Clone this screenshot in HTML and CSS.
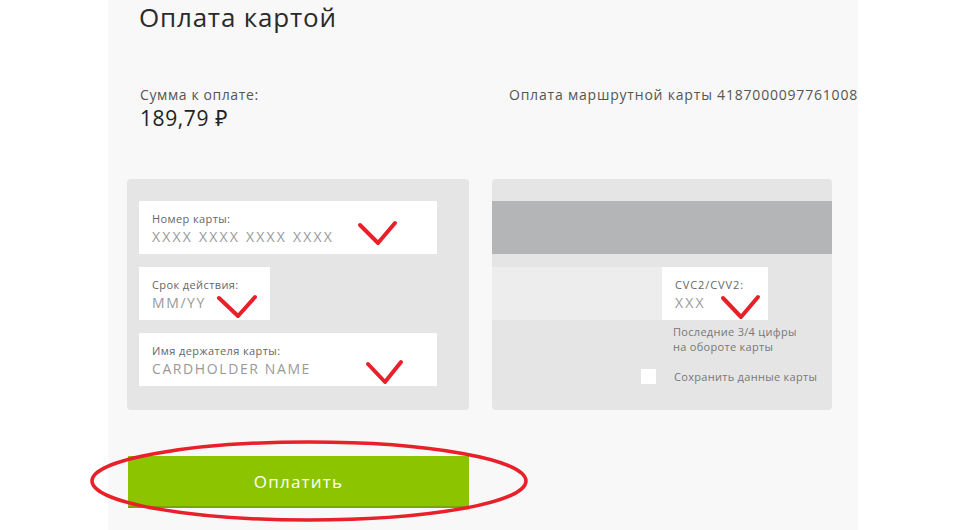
FILE: index.html
```html
<!DOCTYPE html>
<html lang="ru">
<head>
<meta charset="utf-8">
<title>Оплата картой</title>
<link rel="stylesheet" href="styles.css">
</head>
<body>
<div class="panel">
  <h1 class="title">Оплата картой</h1>
  <div class="summary">
    <div class="amount">
      <div class="amount-label">Сумма к оплате:</div>
      <div class="amount-value">189,79 ₽</div>
    </div>
    <div class="purpose">Оплата маршрутной карты 4187000097761008</div>
  </div>
  <div class="cards">
    <div class="card card-front">
      <div class="field field-wide">
        <div class="field-label">Номер карты:</div>
        <div class="field-value field-number">XXXX XXXX XXXX XXXX</div>
      </div>
      <div class="field field-short">
        <div class="field-label">Срок действия:</div>
        <div class="field-value">MM/YY</div>
      </div>
      <div class="field field-wide">
        <div class="field-label">Имя держателя карты:</div>
        <div class="field-value">CARDHOLDER NAME</div>
      </div>
    </div>
    <div class="card card-back">
      <div class="stripe"></div>
      <div class="sign-row">
        <div class="sign-band"></div>
        <div class="field field-cvc">
          <div class="field-label cvc-label">CVC2/CVV2:</div>
          <div class="field-value field-number">XXX</div>
        </div>
      </div>
      <div class="cvc-hint">Последние 3/4 цифры<br>на обороте карты</div>
      <label class="save">
        <span class="checkbox"></span>
        <span class="save-text">Сохранить данные карты</span>
      </label>
    </div>
  </div>
  <button class="pay" type="button">Оплатить</button>
</div>
<svg class="marks" width="978" height="530" viewBox="0 0 978 530" aria-hidden="true">
  <g fill="none" stroke="#e8202a" stroke-linecap="round" stroke-linejoin="round">
    <path stroke-width="4" d="M360 225 L378 243 L395 223"/>
    <path stroke-width="4" d="M219 298 L238 316 L255 297"/>
    <path stroke-width="4" d="M368 364 L385 382 L401 362"/>
    <path stroke-width="4" d="M723 298 L741 317 L758 297"/>
    <ellipse cx="309" cy="481" rx="217" ry="39" stroke-width="3.5"/>
  </g>
</svg>
</body>
</html>
```
FILE: styles.css
```css
html, body {
  margin: 0;
  padding: 0;
  background: #ffffff;
}
body {
  font-family: "Open Sans", "Noto Sans", Arial, sans-serif;
  color: #333;
  width: 978px;
  height: 530px;
  overflow: hidden;
  position: relative;
}
.panel {
  margin-left: 108px;
  width: 750px;
  height: 530px;
  background: #f8f8f8;
  box-sizing: border-box;
  padding: 0 0 0 19px;
}
.title {
  margin: 0;
  padding: 0 0 0 12px;
  font-weight: 400;
  font-size: 26px;
  line-height: 35px;
  letter-spacing: 0.8px;
  color: #2a2a2a;
  height: 35px;
}
.summary {
  display: flex;
  justify-content: space-between;
  align-items: flex-start;
  margin-top: 51px;
  height: 93px;
}
.amount {
  padding-left: 13px;
}
.amount-label {
  font-size: 14px;
  line-height: 18px;
  letter-spacing: 0.6px;
  color: #555;
}
.amount-value {
  font-size: 21px;
  line-height: 28px;
  letter-spacing: 0.6px;
  color: #222;
}
.purpose {
  font-size: 14px;
  line-height: 18px;
  letter-spacing: 0.8px;
  color: #555;
  white-space: nowrap;
}
.cards {
  display: flex;
  gap: 23px;
}
.card {
  background: #e5e5e5;
  border-radius: 4px;
  height: 231px;
  box-sizing: border-box;
}
.card-front {
  width: 342px;
  padding: 22px 0 0 12px;
  display: flex;
  flex-direction: column;
  gap: 13px;
}
.card-back {
  width: 340px;
  padding-top: 22px;
}
.field {
  background: #ffffff;
  height: 53px;
  box-sizing: border-box;
  padding: 10px 0 0 13px;
}
.field-wide { width: 298px; }
.field-short { width: 131px; }
.field-label {
  font-size: 11px;
  line-height: 15px;
  letter-spacing: 0.4px;
  color: #666;
}
.cvc-label {
  letter-spacing: 0.9px;
}
.field-value {
  font-size: 14px;
  line-height: 22px;
  color: #999;
  letter-spacing: 1.6px;
}
.field-number {
  letter-spacing: 2.2px;
}
.stripe {
  height: 53px;
  background: #b4b5b6;
}
.sign-row {
  display: flex;
  margin-top: 13px;
  height: 53px;
}
.sign-band {
  width: 170px;
  background: #ededed;
}
.field-cvc {
  width: 106px;
}
.cvc-hint {
  margin: 4px 0 0 181px;
  font-size: 11px;
  line-height: 15px;
  letter-spacing: 0.3px;
  color: #777;
}
.save {
  display: flex;
  align-items: center;
  margin: 15px 0 0 149px;
  gap: 18px;
}
.checkbox {
  width: 15px;
  height: 15px;
  background: #fff;
  display: block;
}
.save-text {
  font-size: 11px;
  line-height: 15px;
  letter-spacing: 0.3px;
  color: #777;
}
.pay {
  display: block;
  margin: 46px 0 0 1px;
  width: 341px;
  height: 52px;
  border: 0;
  border-bottom: 2px solid #77a60c;
  background: #8cc400;
  color: #fff;
  font-family: inherit;
  font-size: 17px;
  letter-spacing: 1.2px;
  padding: 0;
  cursor: pointer;
}
.marks {
  position: absolute;
  left: 0;
  top: 0;
  pointer-events: none;
}
```
